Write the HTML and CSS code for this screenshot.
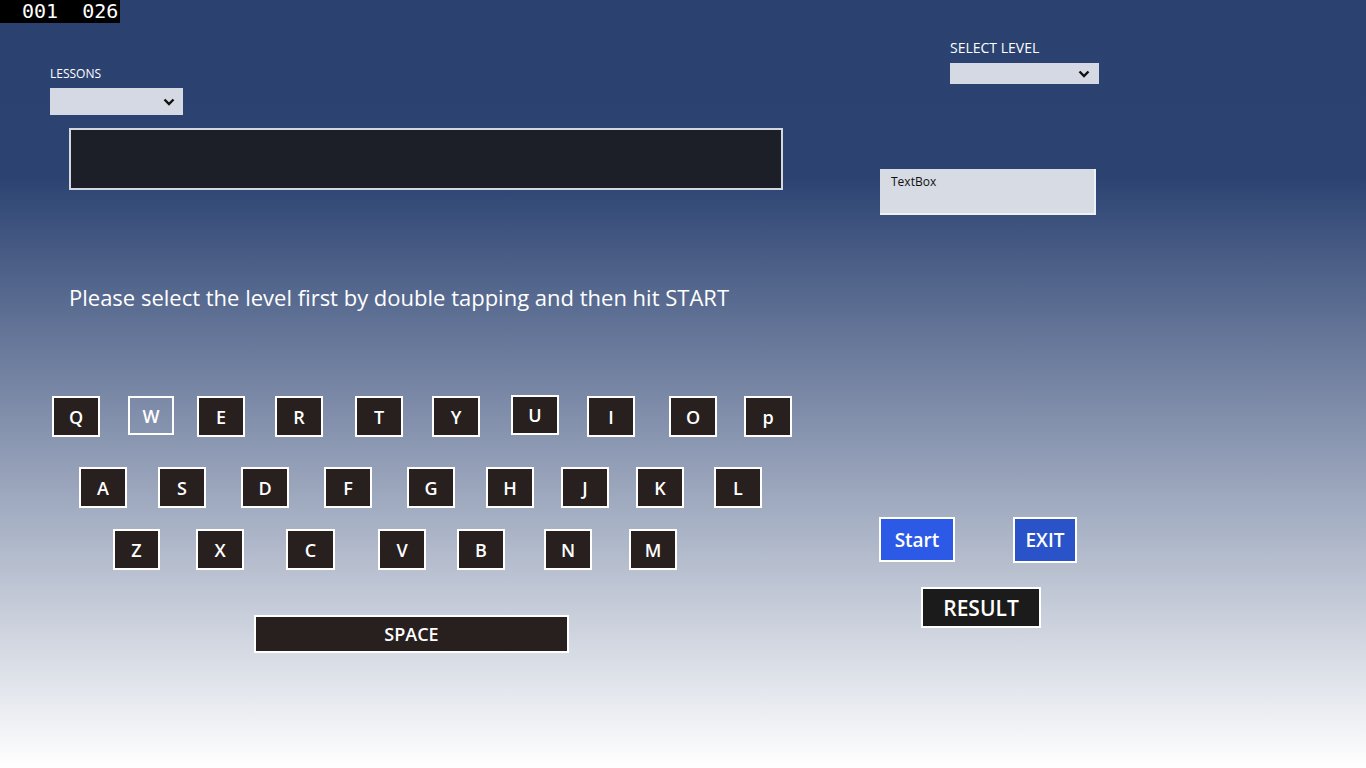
FILE: index.html
```html
<!DOCTYPE html>
<html>
<head>
<meta charset="utf-8">
<title>Typing Tutor</title>
<link rel="stylesheet" href="styles.css">
</head>
<body>
<div class="fps"><span>001</span><span class="fps-second">026</span></div>
<div class="page">
  <div class="left">
    <div class="label lessons-label">LESSONS</div>
    <div class="combo lessons-combo">
      <svg class="chev" width="12" height="8" viewBox="0 0 12 8"><polyline points="1.5,1.5 6,6 10.5,1.5" fill="none" stroke="#111" stroke-width="2.4"/></svg>
    </div>
    <div class="display"></div>
    <div class="instruction">Please select the level first by double tapping and then hit START</div>
    <div class="kb-row row1">
      <div class="key">Q</div><div class="key key-ghost">W</div><div class="key">E</div><div class="key">R</div><div class="key">T</div><div class="key">Y</div><div class="key key-up">U</div><div class="key">I</div><div class="key">O</div><div class="key">p</div>
    </div>
    <div class="kb-row row2">
      <div class="key">A</div><div class="key">S</div><div class="key">D</div><div class="key">F</div><div class="key">G</div><div class="key">H</div><div class="key">J</div><div class="key">K</div><div class="key">L</div>
    </div>
    <div class="kb-row row3">
      <div class="key">Z</div><div class="key">X</div><div class="key">C</div><div class="key">V</div><div class="key">B</div><div class="key">N</div><div class="key">M</div>
    </div>
    <div class="key space">SPACE</div>
  </div>
  <div class="right">
    <div class="label level-label">SELECT LEVEL</div>
    <div class="combo level-combo">
      <svg class="chev" width="12" height="8" viewBox="0 0 12 8"><polyline points="1.5,1.5 6,6 10.5,1.5" fill="none" stroke="#111" stroke-width="2.4"/></svg>
    </div>
    <div class="textbox">TextBox</div>
    <div class="btn-row">
      <div class="btn btn-start">Start</div>
      <div class="btn btn-exit">EXIT</div>
    </div>
    <div class="btn btn-result">RESULT</div>
  </div>
</div>
</body>
</html>
```
FILE: styles.css
```css
html, body {
  margin: 0;
  padding: 0;
}
body {
  width: 1366px;
  height: 768px;
  overflow: hidden;
  font-family: "Open Sans", "Noto Sans", sans-serif;
  color: #fff;
  background: linear-gradient(to bottom, #2b4271 0px, #2c4372 177px, #ffffff 768px);
  position: relative;
}
.fps {
  position: absolute;
  left: 0;
  top: 0;
  width: 120px;
  height: 23px;
  background: #000;
  color: #fff;
  font-family: "DejaVu Sans Mono", monospace;
  font-size: 20px;
  line-height: 23px;
  padding-left: 22px;
  box-sizing: border-box;
  display: flex;
}
.fps-second {
  margin-left: 24px;
}
.page {
  display: flex;
  align-items: flex-start;
}
.left {
  width: 879px;
  padding-left: 50px;
  box-sizing: border-box;
  display: flex;
  flex-direction: column;
  align-items: flex-start;
}
.right {
  display: flex;
  flex-direction: column;
  align-items: flex-start;
}
.label {
  color: #fff;
  text-transform: uppercase;
}
.lessons-label {
  margin-top: 66px;
  font-size: 12px;
  line-height: 16px;
}
.combo {
  background: #d5d9e3;
  display: flex;
  align-items: center;
  justify-content: flex-end;
  box-sizing: border-box;
}
.lessons-combo {
  margin-top: 6px;
  width: 133px;
  height: 27px;
  padding-right: 8px;
}
.display {
  margin-top: 13px;
  margin-left: 19px;
  width: 714px;
  height: 62px;
  box-sizing: border-box;
  background: #1d1f28;
  border: 2px solid #d3d7df;
}
.instruction {
  margin-top: 92px;
  margin-left: 19px;
  font-size: 22px;
  line-height: 30px;
  color: #fff;
  white-space: nowrap;
}
.kb-row {
  display: flex;
  align-items: flex-start;
}
.key {
  width: 48px;
  height: 41px;
  box-sizing: border-box;
  border: 2px solid #fff;
  background: #28201f;
  color: #fff;
  font-weight: 600;
  font-size: 18px;
  display: flex;
  align-items: center;
  justify-content: center;
  flex: none;
}
.key-ghost {
  width: 46px;
  height: 39px;
  background: transparent;
}
.key-up {
  margin-top: -1px;
  height: 40px;
}
.row1 { margin-top: 84px; }
.row1 .key:nth-child(1) { margin-left: 2px; }
.row1 .key:nth-child(2) { margin-left: 28px; }
.row1 .key:nth-child(3) { margin-left: 23px; }
.row1 .key:nth-child(4) { margin-left: 30px; }
.row1 .key:nth-child(5) { margin-left: 32px; }
.row1 .key:nth-child(6) { margin-left: 29px; }
.row1 .key:nth-child(7) { margin-left: 31px; }
.row1 .key:nth-child(8) { margin-left: 28px; }
.row1 .key:nth-child(9) { margin-left: 34px; }
.row1 .key:nth-child(10) { margin-left: 27px; }

.row2 { margin-top: 30px; }
.row2 .key:nth-child(1) { margin-left: 29px; }
.row2 .key:nth-child(2) { margin-left: 31px; }
.row2 .key:nth-child(3) { margin-left: 35px; }
.row2 .key:nth-child(4) { margin-left: 35px; }
.row2 .key:nth-child(5) { margin-left: 35px; }
.row2 .key:nth-child(6) { margin-left: 31px; }
.row2 .key:nth-child(7) { margin-left: 27px; }
.row2 .key:nth-child(8) { margin-left: 27px; }
.row2 .key:nth-child(9) { margin-left: 30px; }

.row3 { margin-top: 21px; }
.row3 .key:nth-child(1) { margin-left: 63px; width: 47px; }
.row3 .key:nth-child(2) { margin-left: 36px; }
.row3 .key:nth-child(3) { margin-left: 42px; width: 49px; }
.row3 .key:nth-child(4) { margin-left: 43px; }
.row3 .key:nth-child(5) { margin-left: 31px; }
.row3 .key:nth-child(6) { margin-left: 39px; }
.row3 .key:nth-child(7) { margin-left: 37px; }

.space {
  margin-top: 45px;
  margin-left: 204px;
  width: 315px;
  height: 38px;
}

.level-label {
  margin-top: 39px;
  margin-left: 71px;
  font-size: 14px;
  line-height: 18px;
}
.level-combo {
  margin-top: 6px;
  margin-left: 71px;
  width: 149px;
  height: 21px;
  padding-right: 9px;
}
.textbox {
  margin-top: 85px;
  margin-left: 1px;
  width: 216px;
  height: 46px;
  box-sizing: border-box;
  background: #d7dbe4;
  border-right: 2px solid #eef0f5;
  border-bottom: 2px solid #eef0f5;
  color: #111;
  font-size: 12px;
  line-height: 16px;
  padding: 5px 0 0 11px;
}
.btn-row {
  margin-top: 302px;
  display: flex;
  align-items: flex-start;
}
.btn {
  box-sizing: border-box;
  border: 2px solid #fff;
  color: #fff;
  font-weight: 600;
  display: flex;
  align-items: center;
  justify-content: center;
  flex: none;
}
.btn-start {
  width: 76px;
  height: 45px;
  background: #2c5ae7;
  font-size: 19px;
}
.btn-exit {
  margin-left: 58px;
  width: 64px;
  height: 46px;
  background: #2a53c9;
  font-size: 19px;
}
.btn-result {
  margin-top: 24px;
  margin-left: 42px;
  width: 120px;
  height: 41px;
  background: #1b1b1b;
  font-size: 21px;
}
```
